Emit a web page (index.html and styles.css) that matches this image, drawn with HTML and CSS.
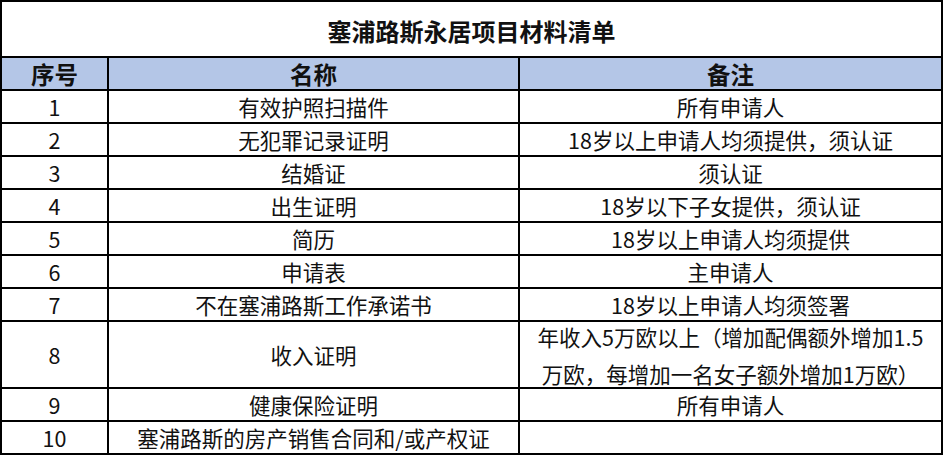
FILE: index.html
```html
<!DOCTYPE html>
<html lang="zh-CN">
<head>
<meta charset="utf-8">
<title>塞浦路斯永居项目材料清单</title>
<link rel="stylesheet" href="styles.css">
</head>
<body>
<div class="sheet">
  <div class="cell title">塞浦路斯永居项目材料清单</div>
  <div class="cell head">序号</div>
  <div class="cell head">名称</div>
  <div class="cell head">备注</div>

  <div class="cell">1</div>
  <div class="cell">有效护照扫描件</div>
  <div class="cell">所有申请人</div>

  <div class="cell">2</div>
  <div class="cell">无犯罪记录证明</div>
  <div class="cell">18岁以上申请人均须提供，须认证</div>

  <div class="cell">3</div>
  <div class="cell">结婚证</div>
  <div class="cell">须认证</div>

  <div class="cell">4</div>
  <div class="cell">出生证明</div>
  <div class="cell">18岁以下子女提供，须认证</div>

  <div class="cell">5</div>
  <div class="cell">简历</div>
  <div class="cell">18岁以上申请人均须提供</div>

  <div class="cell">6</div>
  <div class="cell">申请表</div>
  <div class="cell">主申请人</div>

  <div class="cell">7</div>
  <div class="cell">不在塞浦路斯工作承诺书</div>
  <div class="cell">18岁以上申请人均须签署</div>

  <div class="cell">8</div>
  <div class="cell">收入证明</div>
  <div class="cell wrap"><span>年收入5万欧以上（增加配偶额外增加1.5<br>万欧，每增加一名女子额外增加1万欧）</span></div>

  <div class="cell">9</div>
  <div class="cell">健康保险证明</div>
  <div class="cell">所有申请人</div>

  <div class="cell">10</div>
  <div class="cell">塞浦路斯的房产销售合同和/或产权证</div>
  <div class="cell"></div>
</div>
</body>
</html>
```

FILE: styles.css
```css
html, body {
  margin: 0;
  padding: 0;
  background: #ffffff;
}

body {
  width: 944px;
  height: 455px;
  overflow: hidden;
  font-family: "Noto Sans CJK SC", "Noto Sans", sans-serif;
  color: #111;
}

.sheet {
  display: grid;
  grid-template-columns: 105px 409px 421px;
  grid-template-rows: 54px 31px repeat(7, 31px) 65px 31px 31px;
  gap: 2px;
  padding: 2px;
  width: max-content;
  background: #000;
}

.cell {
  background: #fff;
  display: flex;
  align-items: center;
  justify-content: center;
  text-align: center;
  font-size: 21.5px;
  line-height: 1.2;
  white-space: nowrap;
  padding-top: 1px;
}

.title {
  grid-column: 1 / 4;
  font-size: 24px;
  font-weight: 700;
  padding-top: 5px;
}

.head {
  background: #b4c6e7;
  font-size: 23.5px;
  font-weight: 700;
  padding-top: 2px;
}

.wrap {
  overflow: visible;
  padding-top: 0;
}

.wrap span {
  line-height: 37px;
  display: block;
}
```
